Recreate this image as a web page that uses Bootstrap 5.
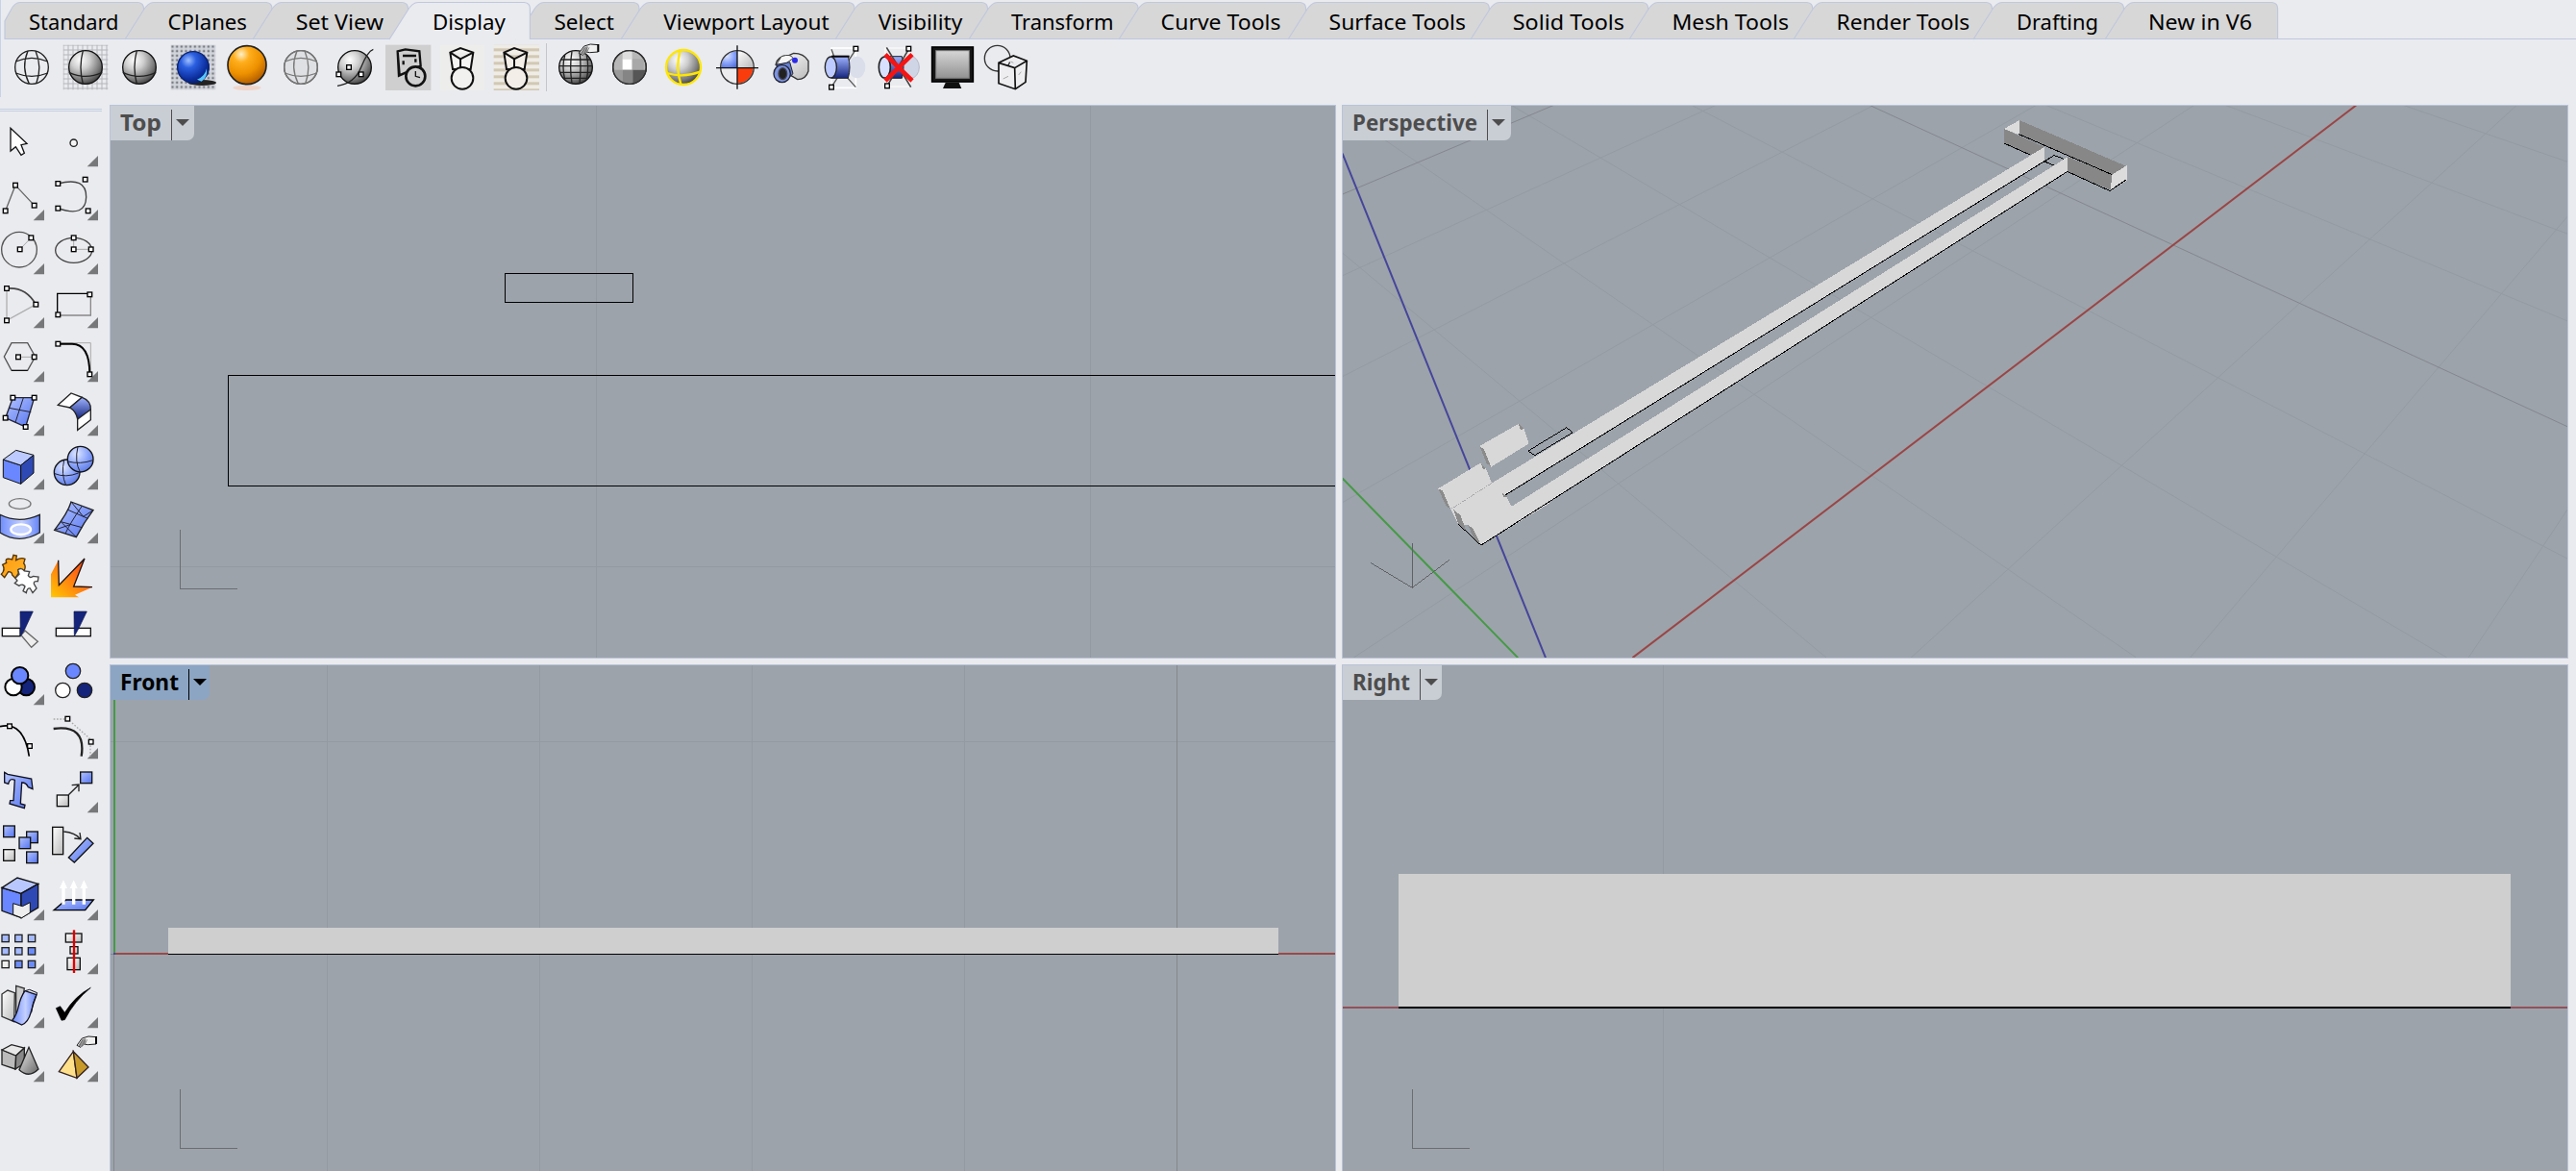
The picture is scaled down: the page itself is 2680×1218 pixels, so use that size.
<!DOCTYPE html>
<html lang="en">
<head>
<meta charset="utf-8">
<title>Modeling workspace</title>
<link href="https://cdn.jsdelivr.net/npm/bootstrap@5.3.0/dist/css/bootstrap.min.css" rel="stylesheet">
<style>
body{background:#eaebef;font-family:"Noto Sans","Open Sans",sans-serif;height:1218px;width:2680px;color:#000}
svg{display:block;overflow:visible}
svg text{font-family:"Noto Sans","Open Sans",sans-serif}
.tabstrip{height:41px;padding-left:5px;border-bottom:0;position:relative;flex-wrap:nowrap}
.tabstrip::after{content:"";position:absolute;left:5px;right:0;bottom:0;height:1px;background:#bfc8de}
.tabstrip .tab-item{height:41px;flex:none}
.tabstrip .active{position:relative;z-index:2}
.toolstrip{height:68px;padding:0 0 11px 5px;position:relative}
.toolstrip::before{content:"";position:absolute;left:0;top:-41px;width:1px;height:101px;background:#c9d2e6}
.tool{width:56px;height:56px;flex:none}
.tsep{width:1px;height:50px;margin:0 2px 0 3px;background:#c4c6cc}
.sidebar{width:114px;overflow:hidden}
.grip{width:106px;height:3px;margin:4px 0 2px;border-top:1px solid #c5d0e2;border-bottom:1px solid #c5d0e2}
.toolgrid{display:grid;grid-template-columns:56px 56px;grid-auto-rows:56px;margin-left:-10px}
.views{display:grid;grid-template-columns:1276px 1276px;grid-template-rows:576px 540px;gap:6px}
.view{border:1px solid #bac4d8;background:#9ca3ab;overflow:hidden;position:relative}
.view>svg{overflow:hidden}
.chip{position:absolute;left:0;top:0;height:36px;background:#c9ced5;border-bottom-right-radius:7px;color:#4d4d4d}
.chip.current{background:#8ca5c3;color:#000}
.chip svg text{font-weight:700;font-size:23px;fill:currentColor}
.chip .bar{width:1px;height:33px;background:currentColor}
</style>
<script src="https://cdn.jsdelivr.net/npm/bootstrap@5.3.0/dist/js/bootstrap.bundle.min.js"></script>
</head>
<body class="d-flex flex-column overflow-hidden m-0">
<svg width="0" height="0" class="position-absolute">
<defs>
<radialGradient id="gs" cx=".35" cy=".28" r=".8"><stop offset="0" stop-color="#fff"/><stop offset=".35" stop-color="#cfcfcf"/><stop offset=".75" stop-color="#777"/><stop offset="1" stop-color="#333"/></radialGradient>
<radialGradient id="bs" cx=".35" cy=".28" r=".8"><stop offset="0" stop-color="#9fc0ff"/><stop offset=".3" stop-color="#2b5fe0"/><stop offset=".75" stop-color="#0b2d9c"/><stop offset="1" stop-color="#0a1d60"/></radialGradient>
<radialGradient id="os" cx=".35" cy=".22" r=".85"><stop offset="0" stop-color="#fff0c8"/><stop offset=".25" stop-color="#ffae1c"/><stop offset=".6" stop-color="#ee9100"/><stop offset="1" stop-color="#a85300"/></radialGradient>
<radialGradient id="lb" cx=".35" cy=".28" r=".9"><stop offset="0" stop-color="#dfe7ff"/><stop offset=".5" stop-color="#8ba5fa"/><stop offset="1" stop-color="#4a68d8"/></radialGradient>
<linearGradient id="bl" x1="0" y1="0" x2="1" y2="1"><stop offset="0" stop-color="#b4c4ff"/><stop offset="1" stop-color="#5474f0"/></linearGradient>
<linearGradient id="bv" x1="0" y1="0" x2="0" y2="1"><stop offset="0" stop-color="#9fb2ff"/><stop offset="1" stop-color="#14247c"/></linearGradient>
<linearGradient id="bh" x1="0" y1="0" x2="1" y2="0"><stop offset="0" stop-color="#6f8dfc"/><stop offset=".55" stop-color="#c4d0ff"/><stop offset="1" stop-color="#6484f6"/></linearGradient>
<linearGradient id="gl" x1="0" y1="0" x2="1" y2="1"><stop offset="0" stop-color="#fff"/><stop offset="1" stop-color="#bbb"/></linearGradient>
<linearGradient id="gd" x1="0" y1="0" x2="1" y2="1"><stop offset="0" stop-color="#eee"/><stop offset="1" stop-color="#666"/></linearGradient>
<linearGradient id="scr" x1="0" y1="0" x2="0" y2="1"><stop offset="0" stop-color="#d6d6d6"/><stop offset="1" stop-color="#929292"/></linearGradient>
<linearGradient id="fire" x1="0" y1="1" x2="1" y2="0"><stop offset="0" stop-color="#ffc800"/><stop offset=".55" stop-color="#ff7414"/><stop offset="1" stop-color="#f03a10"/></linearGradient>
<linearGradient id="og" x1="0" y1="0" x2="1" y2="1"><stop offset="0" stop-color="#ff9a10"/><stop offset="1" stop-color="#ffb52a"/></linearGradient>
<pattern id="mesh" width="15" height="15" patternUnits="userSpaceOnUse"><path d="M0 6H15M6 0V15" stroke="#b4b5ba" stroke-width="3"/></pattern>
<pattern id="dots" width="14" height="14" patternUnits="userSpaceOnUse"><rect width="14" height="14" fill="#d3d5dc"/><rect x="2" y="2" width="7" height="7" fill="#7a7c84"/></pattern>
<pattern id="stripe" width="20" height="21" patternUnits="userSpaceOnUse"><rect width="20" height="21" fill="#efece6"/><rect y="4" width="20" height="9" fill="#d2c8b4"/></pattern>
</defs>
</svg>

<ul class="nav nav-tabs tabstrip flex-shrink-0" id="tabs"></ul>
<div class="toolstrip d-flex align-items-center flex-shrink-0" id="tools"></div>
<main class="d-flex flex-shrink-0">
  <aside class="sidebar flex-shrink-0"><div class="grip"></div><div class="toolgrid" id="side"></div></aside>
  <section class="views">
    <div class="view">
      <svg width="1274" height="574" viewBox="115 110 1274 574" fill="none" shape-rendering="crispEdges">
        <path d="M620.5 110V684M1134.5 110V684M115 589.5H1389" stroke="#939aa2"/>
        <path d="M187.5 551V612.5H247" stroke="#6b6d72"/>
        <path d="M525.5 284.5H658.5V314.5H525.5ZM1390 390.5H237.5V505.5H1390" stroke="#000"/>
      </svg>
      <div class="chip d-flex" style="width:87px" data-t="Top" data-w="43"></div>
    </div>
    <div class="view">
      <svg width="1274" height="574" viewBox="1397 110 1274 574" fill="none">
        <g transform="translate(1390 105) scale(.8227 .3763)" stroke="#949ba2" id="gridlines"></g>
        <!-- lower-left block and flanges -->
        <g transform="translate(1380 400) scale(.33333)" shape-rendering="crispEdges">
          <path d="M388 388L515 308 553 334 560 347 578 380 700 368 483 501 440 437 412 436Z" fill="#d8d8d8"/>
          <path d="M348 325L480 245 498 262 516 308 388 388Z" fill="#d8d8d8"/>
          <path d="M478 192L600 122 617 140 632 184 514 257Z" fill="#d8d8d8"/>
          <path d="M348 325L362 330 386 386 376 382ZM478 192L492 202 514 257 500 246ZM396 390L418 408 437 458 412 436ZM441 437L458 450 481 499 462 484ZM482 246L497 262 489 264ZM600 123L616 138 606 142ZM547 334L566 350 553 352Z" fill="#8b8b8b"/>
          <path d="M390 388L515 308" stroke="#a6a6ac" stroke-width="3" stroke-dasharray="5 3"/>
          <path d="M412 436L483 502M630 207L750 134 768 150 650 221Z" stroke="#000" stroke-width="3"/>
          <path d="M268 494V636M138 556L268 634 384 547" stroke="#606166" stroke-width="3"/>
        </g>
        <g shape-rendering="crispEdges">
          <!-- far crossbar -->
          <path d="M2101 125L2212.500 173 2198 182 2101 140Z" fill="#878787"/>
          <path d="M2085 134L2127 153V166L2112 161 2085 149ZM2151 163L2197 182V198L2151 178.500Z" fill="#878787"/>
          <path d="M2085 134L2101 125V140H2100ZM2197 182L2212.500 172V188L2196 198Z" fill="#dcdcdc"/>
          <path d="M2100 139.500L2197 181.500M2085 149L2112 161M2151 178.500L2195 198.500 2212 187M2127 168L2137 161.500 2149 166M2127 168L2138 172.500" stroke="#000"/>
          <!-- rails -->
          <path d="M1551.700 502.700L2127.300 152.700V167.500L1566 515Z M1572.700 526.700L2151 163.300V178.300L1541 567Z" fill="#d8d8d8"/>
          <path d="M2127.300 167.500L1566 515M2151 178.300L1541 567" stroke="#000"/>
        </g>
      </svg>
      <div class="chip d-flex" style="width:175px" data-t="Perspective" data-w="130"></div>
    </div>
    <div class="view">
      <svg width="1274" height="574" viewBox="115 692 1274 574" fill="none" shape-rendering="crispEdges">
        <path d="M340.500 692V1218M561.500 692V1218M782.500 692V1218M1003.500 692V1218M115 771.500H1389" stroke="#939aa2"/>
        <path d="M1224.500 692V1218M118.500 992V1218M115 992.500H119" stroke="#84878e"/>
        <rect x="118" y="728" width="2" height="263" fill="#459a45"/>
        <rect x="119" y="991" width="1270" height="2" fill="#9a4949"/>
        <rect x="118" y="991" width="2" height="2" fill="#4747a0"/>
        <rect x="175" y="965" width="1155" height="27" fill="#cfcfcf"/>
        <path d="M175 992.500H1330" stroke="#000"/>
        <path d="M187.500 1133V1194.500H247" stroke="#6b6d72"/>
      </svg>
      <div class="chip current d-flex" style="width:103px" data-t="Front" data-w="61"></div>
    </div>
    <div class="view">
      <svg width="1274" height="574" viewBox="1397 692 1274 574" fill="none" shape-rendering="crispEdges">
        <path d="M1730.500 692V1218" stroke="#939aa2"/>
        <path d="M1397 1048H2671" stroke="#92505a" stroke-width="2"/>
        <rect x="1455" y="909" width="1157" height="139" fill="#cfcfcf"/>
        <path d="M1455 1048H2612" stroke="#000" stroke-width="2"/>
        <path d="M1469.500 1133V1194.500H1529" stroke="#6b6d72"/>
      </svg>
      <div class="chip d-flex" style="width:103px" data-t="Right" data-w="60"></div>
    </div>
  </section>
</main>

<script>
(()=>{
// Tab strip: label, left foot, right edge, label start, label end
const tabs=[["Standard",5,149.5,30,123.5],["CPlanes",130,283,174.5,257],["Set View",263,424.5,307.7,399],["Display",404.6,551,449.5,525.5],["Select",536,665,576.5,639],["Viewport Layout",646,889,690.3,862.7],["Visibility",869,1027.5,913.7,1001.4],["Transform",1007.5,1183.6,1051.4,1158],["Curve Tools",1164,1358.6,1207.6,1332.6],["Surface Tools",1340,1549.4,1382.6,1525],["Solid Tools",1530,1714.7,1573.7,1690],["Mesh Tools",1695,1885.8,1739.4,1861],["Render Tools",1865.5,2072,1910,2048.8],["Drafting",2053,2209.5,2098,2183],["New in V6",2190,2369.6,2235,2343]];
let edge=5;
document.getElementById('tabs').innerHTML=tabs.map(([t,l,r,a,b])=>{
  const w=r-l,on=t==='Display',s=t==='Standard';
  const m=l-edge;edge=r;
  const d=s?`M0 41V22L6 11Q10 2.500 16 2.500H${w-6}Q${w} 3 ${w} 9V41`:`M0 41L19 11Q24 2.500 30 2.500H${w-6}Q${w} 3 ${w} 9V41`;
  return `<li class="nav-item tab-item ${on?'active':''}" style="width:${w}px;margin-left:${m}px"><svg width="${w}" height="41"><path d="${d}" fill="${on?'#eaebef':'#d7d7d7'}" stroke="#c0c8dd" stroke-width="1.2"/><text x="${a-l}" y="31" font-size="22.500" textLength="${b-a}" lengthAdjust="spacingAndGlyphs">${t}</text></svg></li>`;
}).join('');

// Viewport title chips
document.querySelectorAll('.chip').forEach(c=>{
  const w=+c.dataset.w;
  c.innerHTML=`<svg width="${w+20}" height="36"><text x="10" y="26" textLength="${w}" lengthAdjust="spacingAndGlyphs">${c.dataset.t}</text></svg><span class="bar mt-1" style="height:32px"></span><svg width="21" height="36"><path d="M4 14H18L11 21Z" fill="currentColor"/></svg>`;
});

// Ground grid of the perspective view
const lines=[[222,12,1405,1539],[450,12,1557,1265],[0,15,1012,1539],[8,420,620,1539],[898,12,1557,608],[1125,12,1557,367],[1350,12,1557,168],[8,483,480,12],[8,762,680,12],[8,1110,885,12],[22,1539,1085,12],[727,1539,1493,12],[1080,1539,1557,320],[1432,1539,1557,1130],[8,258,275,12,'#85878e'],[675,12,1557,900,'#85878e'],[375,1539,1290,12,'#9a4545',2],[8,1043,230,1539,'#459a45',2],[8,145,265,1539,'#45459a',2]];
document.getElementById('gridlines').innerHTML=lines.map(([a,b,c,d,k,w])=>`<line x1="${a}" y1="${b}" x2="${c}" y2="${d}" vector-effect="non-scaling-stroke" stroke-width="${w||1}" ${k?`stroke="${k}"`:''}/>`).join('');

// Icons are drawn on a grid of three units to the pixel
const h=(...p)=>{let o='';for(let i=0;i<p.length;i+=2)o+=`<rect x="${p[i]-7}" y="${p[i+1]-7}" width="14" height="14" fill="#fff" stroke="#000" stroke-width="4"/>`;return o};
const P=(d,f='none',s='#000',w=3,x='')=>`<path d="${d}" fill="${f}" stroke="${s}" stroke-width="${w}" ${x}/>`;
const C=(x,y,r,f='none',s='#111',w=4)=>`<circle cx="${x}" cy="${y}" r="${r}" fill="${f}" stroke="${s}" stroke-width="${w}"/>`;
const E=(x,y,a,b,f='none',s='#111',w=3)=>`<ellipse cx="${x}" cy="${y}" rx="${a}" ry="${b}" fill="${f}" stroke="${s}" stroke-width="${w}"/>`;
const R=(x,y,w,hh,f='none',s='#111',k=4)=>`<rect x="${x}" y="${y}" width="${w}" height="${hh}" fill="${f}" stroke="${s}" stroke-width="${k}"/>`;
const cross=P('M-8 -52Q-22 0 -8 52M-52 16Q0 40 52 16','none','#222',4);
const wire=c=>C(0,0,52,'none',c,4)+P('M-12 -51Q-34 0 -8 51M12 -51Q34 0 14 51M-50 -18Q0 -40 50 -18M-50 18Q0 38 50 18','none',c,4);
const hand=(x,y)=>`<g transform="translate(${x} ${y})">${P('M-30 14L-14 -8 6 -14 30 -12V10L4 12-8 10-18 20Z','#f0f0f0','#222',3)}${P('M-26 14L-12 -6 -2 -8-4 10-18 18Z','#999','none')}${P('M-22 16L-12 -4M-14 16L-4 -4M-6 12L2 -4','none','#555',2)}${P('M30 -14V10','none','#000',6)}</g>`;
const toolIcons=[
 wire('#222'),
 R(-70,-70,140,140,'url(#mesh)','none')+C(0,0,52,'url(#gs)')+cross,
 C(0,0,52,'url(#gs)')+cross,
 R(-70,-70,140,140,'url(#dots)','none')+E(28,48,44,9,'#222','none')+C(0,0,49,'url(#bs)','#0b2370')+P('M12 38Q36 30 42 4 46 32 26 44Z','#58c8ff','none'),
 E(0,64,44,8,'#f0d5c8','none')+C(0,-7,60,'url(#os)','#222',5),
 C(0,0,52,'#dfe0e3','#555')+wire('#777'),
 C(0,0,52,'url(#gs)')+P('M-54 58Q0 50 20 0T58 -56','none','#222',4)+h(-50,22,-18,0,20,22),
 R(-72,-70,142,142,'#cfcfcf','none')+P('M-34 -50L-10 -56 34 -50 38 -4 -30 26ZM-34 -50L-28 26M-18 -36H24M-16 -20V-8M22 -26V-16','none','#111',7)+C(22,28,30,'#cfcfcf','#111',8)+P('M22 12V28L36 32','none','#111',4),
 R(-68,-70,136,142,'#ededeb','none')+P('M-38 -46L-6 -60 34 -46 26 6-30 6ZM-38 -46L-6 -26 34 -46M-6 -26V4','#f4f4f2','#111',6)+C(0,34,34,'#f1f1ef','#111',6),
 R(-70,-70,142,142,'url(#stripe)','none')+P('M-38 -46L-6 -60 34 -46 26 6-30 6ZM-38 -46L-6 -26 34 -46M-6 -26V4','#f4f0e8','#111',6)+C(0,34,34,'#f3efe8','#111',6),
 '|',
 C(0,0,52,'url(#gs)')+P('M-34 -38Q-44 0 -34 38M-12 -50Q-20 0 -12 50M12 -50Q18 0 12 50M34 -38Q42 0 34 38M-46 -24H46M-52 -4H52M-50 16H50M-40 34H40','none','#222',4)+hand(40,-58),
 C(0,0,52,'#b7b7b7')+R(-22,-26,30,34,'#fff','none')+R(8,-26,36,34,'#a8a8a8','none')+P('M-50 8H-22V48Q-46 38 -50 8Z','#999','none')+R(-22,8,32,43,'#858585','none')+P('M10 8H50Q44 40 10 50Z','#555','none')+P('M-22 -26V-50H8V-26Z','#ddd','none')+C(0,0,52,'none','#333'),
 C(0,0,54,'url(#gs)','#ffe600',7)+P('M-10 -52Q-26 0 -8 52M-52 18Q0 34 52 14','none','#ffe600',7),
 C(0,0,51,'#ececee','none')+P('M0 0H-50A50 50 0 0 1 0 -50Z','url(#lb)','none')+P('M0 0H50A50 50 0 0 1 0 50Z','#fa3c0c','none')+P('M0 0V-50A50 50 0 0 1 50 0Z','url(#gl)','none')+C(0,0,52,'none','#333')+P('M-66 2H66M0 -68V68','none','#111',4),
 P('M-48 -8Q-42 -36 -10 -36L8 -44Q40 -44 54 -20V12Q46 38 20 38L-10 20Z','url(#gl)','#333',4)+P('M-30 -34Q0 -44 6 -28L-16 -12-46 -8Z','#f6f6f6','#444',3)+C(12,-22,9,'#2b2be8','none')+P('M-46 -8L-4 -16 6 20-22 46Z','#6580d0','#223',3)+E(-28,20,26,27,'#7c94e0','#223',4)+E(-26,20,13,18,'#222','#445',4),
 R(-42,-60,76,124,'none','#fff',5)+E(38,0,26,34,'#dadeea','none')+P('M-42 -56L-22 0 34 62M34 -56L-42 62','none','#555',4)+P('M-42 -34H10Q20 0 10 34H-42Z','url(#bv)','#222',3)+P('M-42 -34H14','none','#000',6)+E(-44,0,18,33,'#bccaff','#222',4)+h(34,-58,-42,62),
 R(-42,-60,76,120,'none','#f7f7f7',5)+E(38,0,26,34,'#cfd5e5','#b4bac8')+P('M-42 -34H10Q20 0 10 34H-42Z','url(#bv)','#222',3)+E(-44,0,18,33,'#d8e0ff','#222',5)+P('M-38 -62L38 62M32 -58L-36 58','none','#444',5)+P('M-42 -40L42 42M42 -40L-42 42','none','#f51414',14)+h(31,-58,-36,58),
 R(-64,-63,128,108,'#161616','#000',5)+R(-52,-52,104,86,'url(#scr)','#777',3)+P('M-22 48H20L28 66H-30Z','#111','none'),
 C(-28,-28,40,'none','#333')+P('M-24 -14L22 -36 64 -20 60 46 28 68-24 50ZM-24 -14L26 2 64 -20M26 2L28 68','#eeeef0','#111',5)+P('M-10 36L6 28M38 24L46 14M14 -18L22 -14','none','#aaa',3)
];
document.getElementById('tools').innerHTML=toolIcons.map(s=>s==='|'?'<div class="tsep"></div>':`<svg class="tool" viewBox="-84 -84 168 168">${s}</svg>`).join('');

const B='url(#bl)';
// [row origin, drawing, flyout marker], left then right in each row
const side=[
[100,P('M33 100V171L49 158 66 184 76 178 66 152 84 148Z','#fff','#111',4),0],
[100,C(230,146,11,'#f5f5f5','#222',4),1],
[100,P('M17 358L48 278 107 341','none','#666',4)+h(17,358,48,278,107,341),1],
[100,P('M181 273Q270 250 269 315T181 350','none','#444',4)+h(181,273,266,260,181,350,275,358),1],
[100,C(60,479,55,'none','#555')+P('M62 478L97 442','none','#aaa')+h(62,478,97,442),1],
[100,E(230,481,57,39,'none','#444',4)+P('M230 442V478H284','none','#aaa')+h(230,442,230,478,284,478),1],
[100,P('M21 600V700L112 650','none','#b0b0b0',4)+P('M21 600Q80 594 112 650','none','#444',5)+h(21,600,21,700,112,650),1],
[100,P('M179 684H283V616','none','#888',4)+P('M179 684V616H283','none','#000',4)+h(181,682,280,619),1],
[100,P('M36 770H86L110 813 86 856H36L13 813Z','none','#555',4)+P('M57 814H107','none','#aaa')+P('M36 856H86')+h(57,814,107,814),1],
[100,P('M181 770H283V868','none','#aaa',3)+P('M181 773H225Q280 773 280 868','none','#000',6)+h(181,773,280,868),1],
[400,P('M40 41H107L80 132 17 104Z',B,'#223',4)+P('M73 41L48 118M28 73L97 86','none','#223',3)+h(40,41,107,41,17,104,80,132),1],
[400,P('M181 64L222 27 256 40 218 72ZM242 95L283 78V110L242 142Z','#fff','#222',4)+P('M218 72L256 40Q284 50 283 78L242 108Q238 84 218 72Z','url(#bv)','#222',4),1],
[400,P('M10 234L65 252V310L10 290Z','#6a87ff','#111',3)+P('M10 234L50 205 105 220 65 252Z','#bccaff','#111',3)+P('M105 220V276L65 310V252Z','#2f49b4','#111',3),1],
[400,C(209,274,40,'url(#lb)')+P('M200 236Q190 280 206 314M171 278Q205 292 245 276','none','#223')+C(251,233,40,'url(#lb)')+P('M243 194Q232 240 250 273M212 240Q250 250 290 236','none','#223'),1],
[400,E(62,372,34,16,'none','#777',4)+P('M0 406Q60 436 124 406V462Q60 500 0 462Z','url(#bh)','#222',4)+E(65,452,31,16,'#c6d2ff','#fff',7),1],
[400,P('M222 366L291 392Q262 430 238 476L170 454Q212 400 222 366Z',B,'#222',4)+P('M256 379Q220 430 204 465M210 390L274 418M190 428L256 446M222 366L260 412 291 392M190 428L238 476M170 454L222 436','none','#223',3),1],
[400,P('M8 562L20 556Q14 542 30 544L38 546 42 532 52 534 50 548Q66 538 78 544L74 558Q82 566 76 580L64 574Q54 576 58 588L48 604 38 594Q38 584 26 584L14 602 4 592Q18 578 8 562Z','url(#og)','#553300',4)+P('M48 604L60 592 56 578Q68 570 76 582L92 584 88 596Q94 606 104 598L120 600 118 614Q104 612 106 622L114 636 102 650 94 636Q84 634 82 650L72 644 78 630Q70 620 60 628L46 620 54 612Z','#fff','#444',4),0],
[400,P('M159 664V592L182 548 184 626 264 543 230 630 288 632 234 656 246 664Z','url(#fire)','none')+P('M182 548L184 626 264 543 230 630 288 632','none','#211',4),0],
[400,R(7,760,56,25,'#fff')+P('M78 768L66 782 98 820 118 802Z','#eee','#666',4)+P('M63 708H103L76 766 64 785Z','#14247a','#0a1550',2),0],
[400,R(175,760,108,25,'#fff')+P('M231 708H271L246 760 232 785Z','#14247a','#0a1550',2),0],
[400,C(82,944,26,'#14247a','#000',6)+C(42,944,26,'#fff','#000',6)+C(62,908,26,'#6a87ff','#000',6),1],
[400,C(228,894,23,'#6a87ff','#222')+C(196,954,23,'#fff','#222')+C(264,954,23,'#14247a','#222'),0],
[760,P('M0 -13Q74 -30 91 80','none','#000',5)+h(30,-14,93,48),0],
[760,P('M167 -6Q270 -20 254 80','none','#222',7)+P('M167 -36H205M225 -24L284 28M282 46V80','none','#aaa',4,'stroke-dasharray="5 5"')+h(211,-37,284,35),1],
[760,P('M14 130L24 136 98 150 102 182 88 176Q82 162 68 162L64 228 78 232 76 242 30 228 32 218 42 218 46 154Q30 146 26 166L14 162Z',B,'#112',4),0],
[760,R(178,201,36,35,'url(#gl)')+R(251,129,36,35,B)+P('M214 200L246 169M224 170L246 168 246 190','none','#222',4),1],
[760,R(11,297,35,35,B)+R(11,371,35,35,'url(#gl)')+R(83,315,35,35,B)+R(60,333,35,35,B)+R(83,378,35,35,B),0],
[760,R(164,301,33,85,'url(#gl)')+P('M199 315Q234 318 250 337M232 336L252 338 249 318','none','#222',4)+P('M214 396L272 334 291 352 232 411Z',B,'#111',4),0],
[760,P('M6 490L66 508V584L6 562Z','#6a87ff','#111',4)+P('M6 490L54 459 119 478 66 508Z','#b8c8ff','#111',4)+P('M119 478V552L66 584V508Z','#2f49b4','#111',4)+P('M41 539L70 548 94 536V568L68 584 41 574Z','#eee','#111',3),1],
[760,P('M168 560L206 528H292L266 560Z',B,'#000',4)+P('M198 542V484M230 542V484M262 542V484','none','#fff',10)+P('M186 492L198 466 210 492ZM218 492L230 466 242 492ZM250 492L262 466 274 492Z','#fff','none'),1],
[760,[637,677,718].map((y,i)=>[6,47,88].map((x,j)=>R(x,y,22,22,i==2&&!j?'#eee':i+j>2?'#6b8cf8':'#a5baff','#222')).join('')).join(''),1],
[760,R(205,633,50,27,'url(#gl)')+R(219,674,24,22,'url(#gl)')+R(210,709,40,37,'url(#gl)')+P('M231 622V756','none','#e00000',7),1],
[760,P('M50 796L76 804 60 900 50 880Z','#ccc','#333',4)+P('M6 822L24 810 46 818 44 908 6 892Z','url(#gl)','#333',4)+P('M78 812L114 824Q104 850 96 880T68 918L38 904Q52 888 58 860T78 812Z','url(#bh)','#112',4)+P('M78 812L92 808 116 818Q100 850 98 880','none','#112',3),1],
[760,P('M175 866L188 860 202 880Q234 828 283 802Q232 844 202 902L192 904Z','#000','#000',2),1],
[760,P('M6 996L50 1014 48 1056 6 1042Z','#bbb','#222',4)+P('M6 996L36 980 76 990 50 1014Z','#e8e8e8','#222',4)+P('M76 990V1038L48 1056 50 1014Z','#888','#222',4)+P('M90 988L120 1056Q90 1086 60 1058Z','url(#gd)','#222',4),1],
[760,P('M229 1001L184 1064 240 1084Z','#ffe08a','#322',4)+P('M229 1001L276 1050 240 1084Z','#c79a2a','#322',4)+hand(270,968),1]];
document.getElementById('side').innerHTML=side.map(([b,s,f],i)=>{
  const x=(i%2?46:-10)*3,y=(118+56*(i>>1)-b)*3;
  const t=f?P(`M${x+168} ${y+132}V${y+166}H${x+134}Z`,'#77787a','none'):'';
  return `<svg width="56" height="56" viewBox="${x} ${y} 168 168">${t}${s}</svg>`;
}).join('');
})();
</script>
</body>
</html>
